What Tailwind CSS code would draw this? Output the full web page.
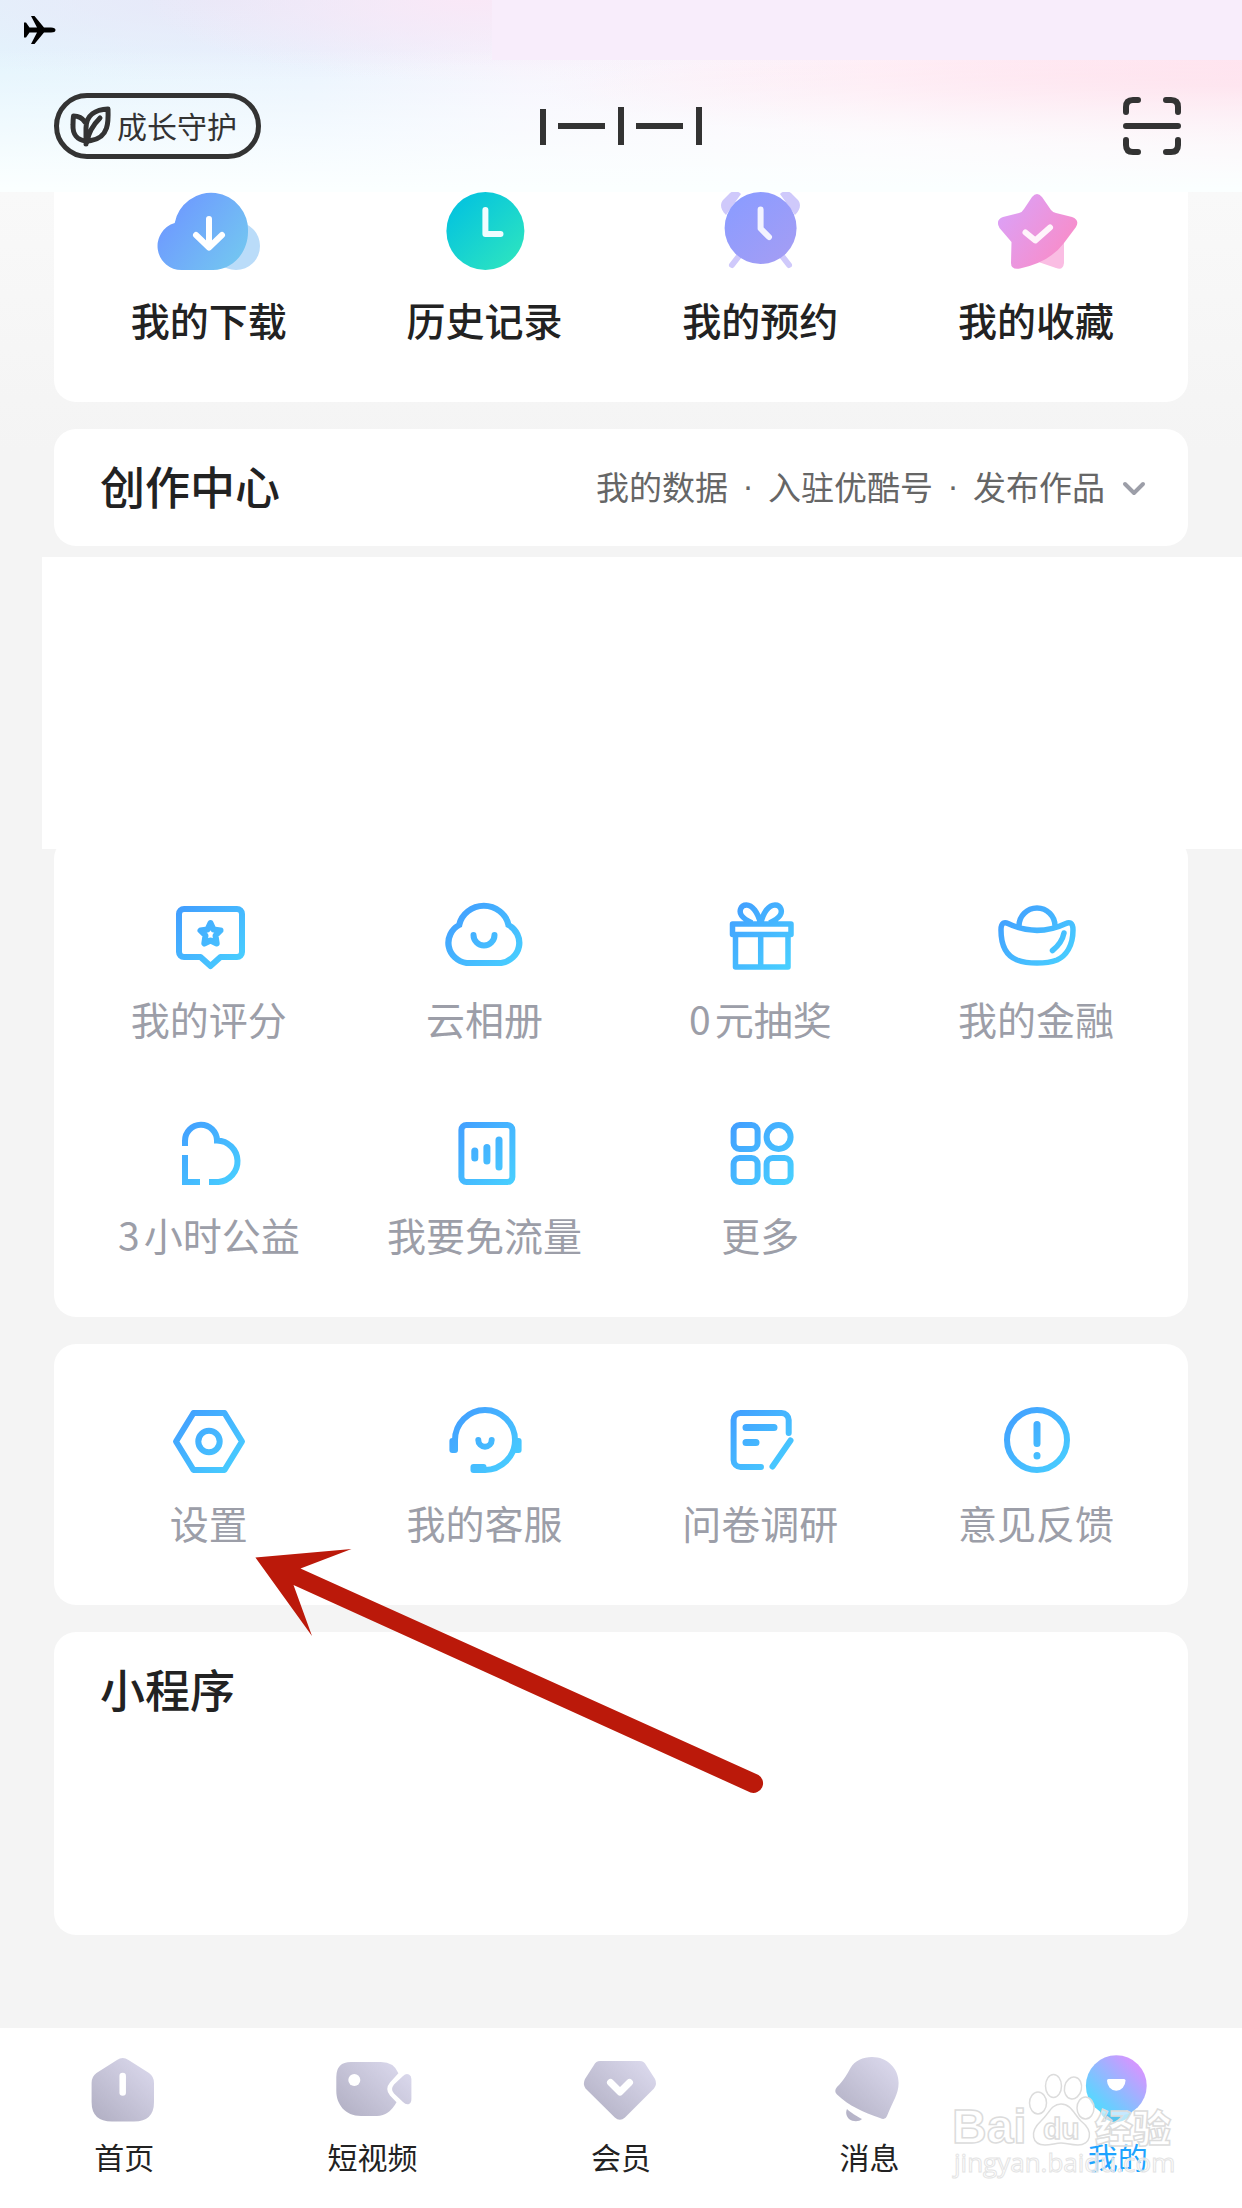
<!DOCTYPE html>
<html lang="zh-CN">
<head>
<meta charset="utf-8">
<meta name="viewport" content="width=device-width, initial-scale=1">
<title>我的</title>
<script src="https://cdn.jsdelivr.net/npm/@tailwindcss/browser@4"></script>
</head>
<body class="font-['Noto_Sans_CJK_SC',sans-serif] bg-[#f4f4f4] text-[#222]">
<!-- Shared gradients for all icons -->
<svg class="absolute size-0" aria-hidden="true">
  <defs>
    <linearGradient id="line" gradientUnits="userSpaceOnUse" x1="14" y1="12" x2="72" y2="72"><stop stop-color="#429eff"/><stop offset="1" stop-color="#48cfff"/></linearGradient>
    <linearGradient id="cloud" gradientUnits="userSpaceOnUse" x1="0" y1="20" x2="70" y2="72"><stop stop-color="#6e9aff"/><stop offset="1" stop-color="#73c5f1"/></linearGradient>
    <linearGradient id="clock" gradientUnits="userSpaceOnUse" x1="14" y1="10" x2="70" y2="68"><stop stop-color="#05c4de"/><stop offset="1" stop-color="#2ae2c2"/></linearGradient>
    <linearGradient id="alarm" gradientUnits="userSpaceOnUse" x1="18" y1="8" x2="68" y2="64"><stop stop-color="#8c9cff"/><stop offset="1" stop-color="#a29df5"/></linearGradient>
    <linearGradient id="star" gradientUnits="userSpaceOnUse" x1="8" y1="12" x2="76" y2="60"><stop stop-color="#dba1f8"/><stop offset="1" stop-color="#f98cc8"/></linearGradient>
    <linearGradient id="tab" gradientUnits="userSpaceOnUse" x1="16" y1="72" x2="66" y2="18"><stop stop-color="#b3b1c5"/><stop offset="1" stop-color="#d9d7eb"/></linearGradient>
    <linearGradient id="me" gradientUnits="userSpaceOnUse" x1="20" y1="60" x2="62" y2="18"><stop stop-color="#56d8ff"/><stop offset="1" stop-color="#d695ff"/></linearGradient>
  </defs>
</svg>

<div class="flex min-h-screen flex-col">
  <header class="bg-[linear-gradient(to_bottom,#fbffff00_25%,#fbffff_98%),radial-gradient(ellipse_at_100%_45%,#ffdcea_0,#ffdcea00_40%),radial-gradient(ellipse_at_38%_0%,#f9e8f7_0,#f9e8f700_30%),radial-gradient(ellipse_at_18%_0%,#e7e8f8_0,#e7e8f800_30%),linear-gradient(to_right,#e3f4fd,#e9f3fe_25%,#f6f4fd_42%,#fff5fb_70%,#ffeaf3)]">
    <div class="flex h-[60px] items-center justify-between">
      <svg class="ml-6 h-8 w-8" viewBox="0 0 32 32" aria-label="飞行模式" role="img"><path d="M0 8.500H2L5.500 13.500H13L7 2H10.500L20 13.500H27Q31.500 13.500 31.500 16T27 18.500H20L10.500 30H7L13 18.500H5.500L2 23.500H0Z"/></svg>
      <div class="h-full w-[60.4%] bg-[#f8edfb]"></div>
    </div>
    <div class="grid h-[132px] grid-cols-3 items-center px-[54px]">
      <button class="flex h-[66px] w-[207px] items-center gap-[5px] rounded-full border-[5px] border-[#333] pl-[11px] text-[#333]">
        <svg class="size-[42px] shrink-0" viewBox="0 0 42 42" fill="none" stroke="#333" stroke-width="5" stroke-linecap="round" stroke-linejoin="round" aria-hidden="true"><path d="M16 39V23C16 10 26 4.500 38 4C38.500 16 39 33 21 35.500Q18 36 16 36C7 35 2.500 29 3 20Q3 15 3.500 11Q11 11 15 17M17 37Q19 24 30 13"/></svg>
        <span class="pb-0.5 text-[30px] leading-10 whitespace-nowrap">成长守护</span>
      </button>
      <svg class="h-[38px] w-[162px] justify-self-center" viewBox="0 0 162 38" fill="#333" role="img" aria-label="标志"><path d="M0 2H6V38H0ZM18 16H65V22H18ZM78 0H84V38H78ZM96 16H143V22H96ZM156 0H162V38H156Z"/></svg>
      <button class="mr-[7px] justify-self-end" aria-label="扫一扫">
        <svg class="size-[58px]" viewBox="0 0 58 58" fill="none" stroke="#333" stroke-width="6" stroke-linecap="round"><path d="M3 15V10Q3 3 10 3H15M43 3H48Q55 3 55 10V15M55 43V48Q55 55 48 55H43M15 55H10Q3 55 3 48V43M3 29H55"/></svg>
      </button>
    </div>
  </header>

  <main class="flex grow flex-col bg-[linear-gradient(#f9f9f9,#f4f4f4_260px)] pb-[93px]">
    <section class="mx-[54px] grid grid-cols-4 overflow-hidden rounded-b-[22px] bg-white pr-[14px] pb-[55px] pl-[17px] text-[39px] leading-[56px] font-medium">
      <a href="#" class="flex flex-col items-center gap-[15px]">
        <svg class="size-[84px] overflow-visible" viewBox="0 0 84 84" aria-hidden="true"><circle cx="69" cy="54" r="24" fill="#badcf9"/><path d="M15 78A24 24 0 0 1 7.700 31A37 37 0 0 1 81 40C81 60 66 78 46 78Z" fill="url(#cloud)"/><path d="M42 27V55M29 43L42 55.500 55 43" fill="none" stroke="#fff" stroke-width="6" stroke-linecap="round" stroke-linejoin="round"/></svg>
        <span>我的下载</span></a>
      <a href="#" class="flex flex-col items-center gap-[15px]">
        <svg class="size-[84px] overflow-visible" viewBox="0 0 84 84" aria-hidden="true"><circle cx="42.400" cy="39" r="39" fill="url(#clock)"/><path d="M42.400 18V42H57.500" fill="none" stroke="#effdff" stroke-width="6" stroke-linecap="round" stroke-linejoin="round"/></svg>
        <span>历史记录</span></a>
      <a href="#" class="flex flex-col items-center gap-[15px]">
        <svg class="size-[84px] overflow-visible" viewBox="0 0 84 84" aria-hidden="true"><path d="M8 23C2 17 2 12 5 8L12 1C16 -2 20 -1 23 2ZM77 23C83 17 83 12 80 8L73 1C69 -2 65 -1 62 2Z" fill="#cfc9fb"/><path d="M21 64L14 73M64 64L71 73" stroke="#cfc9fb" stroke-width="6" stroke-linecap="round"/><circle cx="42.600" cy="36" r="36" fill="url(#alarm)"/><path d="M42.600 17.500V36.500L51 45" fill="none" stroke="#f3f3ff" stroke-width="6" stroke-linecap="round" stroke-linejoin="round"/></svg>
        <span>我的预约</span></a>
      <a href="#" class="flex flex-col items-center gap-[15px]">
        <svg class="size-[84px] overflow-visible" viewBox="0 0 84 84" aria-hidden="true"><path d="M70 45V71Q69 79 62 76L43 69.500L40 50Z" fill="#fabde3"/><path d="M38 5Q43 -1 48 5L57 18Q59 20.500 62 21L78 25Q86 28 82 35L70 51Q56 70 26 76.500Q17 78 17 71L17.500 50L5.500 36Q1 28 9 25L25 21Q28 20.500 30 17Z" fill="url(#star)"/><path d="M31.500 40.500L41.300 48.500 56 35.500" fill="none" stroke="#fff4fb" stroke-width="6" stroke-linecap="round" stroke-linejoin="round"/></svg>
        <span>我的收藏</span></a>
    </section>

    <section class="mx-[54px] mt-[27px] flex h-[117px] items-center justify-between rounded-[22px] bg-white pr-[42px] pb-[3px] pl-[46px]">
      <h2 class="text-[45px] leading-[60px] font-medium">创作中心</h2>
      <button class="flex items-center gap-[17px] text-[33px] leading-[48px] text-[#666]">
        <span class="flex items-center whitespace-nowrap"><span>我的数据</span><span class="w-[40px] text-center font-['Liberation_Sans',sans-serif]">·</span><span>入驻优酷号</span><span class="w-[40px] text-center font-['Liberation_Sans',sans-serif]">·</span><span>发布作品</span></span>
        <svg class="mt-1 h-4 w-6" viewBox="0 0 24 16" fill="none" stroke="#9c9ea8" stroke-width="4" stroke-linecap="round" stroke-linejoin="round" aria-hidden="true"><path d="M3 4L12 13 21 4"/></svg>
      </button>
    </section>

    <div class="z-10 mt-[11px] ml-[42px] h-[292px] bg-white"></div>

    <section class="mx-[54px] -mt-3 grid grid-cols-4 gap-y-16 rounded-[22px] bg-white pt-[57px] pr-[14px] pb-[55px] pl-[17px] text-[39px] leading-[56px] whitespace-nowrap text-[#9c9ea8]">
      <a href="#" class="flex flex-col items-center gap-3">
        <svg class="size-[84px]" viewBox="0 0 84 84" fill="none" stroke="url(#line)" stroke-width="6" stroke-linejoin="round" aria-hidden="true"><path d="M17 15H70a5 5 0 0 1 5 5V58a5 5 0 0 1-5 5H53.500L43.500 72 33.500 63H17a5 5 0 0 1-5-5V20a5 5 0 0 1 5-5Z"/><path d="M43.500 29L46.500 35.500 53.500 36.500 48.500 41.500 49.700 49.500 43.500 46.500 37.300 49.500 38.500 41.500 33.500 36.500 40.500 35.500Z"/></svg>
        <span>我的评分</span></a>
      <a href="#" class="flex flex-col items-center gap-3">
        <svg class="size-[84px]" viewBox="0 0 84 84" fill="none" stroke="url(#line)" stroke-width="6" stroke-linecap="round" aria-hidden="true"><path d="M17.500 31A24 24 0 0 1 64.500 31A20.500 20.500 0 0 1 57.500 69H24.500A20.500 20.500 0 0 1 17.500 31Z" transform="translate(-2.200 0) scale(1.050 1)"/><path d="M30.500 41a10.500 10.500 0 0 0 21 0"/></svg>
        <span>云相册</span></a>
      <a href="#" class="flex flex-col items-center gap-3">
        <svg class="size-[84px]" viewBox="0 0 84 84" fill="none" stroke="url(#line)" stroke-width="5.500" stroke-linejoin="round" aria-hidden="true"><path d="M14.500 30H73V40.500H14.500ZM17.500 40.500H70V73H17.500ZM42.700 40V73M42.700 30C40 18 34 11 28.500 11C22 11 21 18 23.500 21.500C26 25 30 27 34 29M42.700 30C45 18 51 11 57 11C63.500 11 64.500 18 62 21.500C59.500 25 55.500 27 51.500 29"/></svg>
        <span><span class="mr-1">0</span>元抽奖</span></a>
      <a href="#" class="flex flex-col items-center gap-3">
        <svg class="size-[84px]" viewBox="0 0 84 84" fill="none" stroke="url(#line)" stroke-width="5.500" stroke-linecap="round" aria-hidden="true"><path d="M25 32A18 18 0 0 1 61 32M7 36C7 28 11 28 14 29.500C33 38.500 53 38.500 72 29.500C75 28 79 28 79 36C79 52 72 62 63 66C52 70 34 70 23 66C13 62 7 52 7 36M70 39Q68 49 58.500 56.500"/></svg>
        <span>我的金融</span></a>
      <a href="#" class="flex flex-col items-center gap-3">
        <svg class="size-[84px]" viewBox="0 0 84 84" fill="none" stroke="url(#line)" stroke-width="6" aria-hidden="true"><path d="M18 36V31A16 16 0 0 1 50 30.500A21 20.800 0 0 1 51.500 72H42M33 72H18V45"/></svg>
        <span><span class="mr-1">3</span>小时公益</span></a>
      <a href="#" class="flex flex-col items-center gap-3">
        <svg class="size-[84px]" viewBox="0 0 84 84" fill="none" stroke="url(#line)" stroke-width="6" stroke-linecap="round" aria-hidden="true"><rect x="18.400" y="15" width="51" height="57" rx="5"/><path stroke-width="7" d="M31.800 41V48M43.900 37.500V51M56 30V57"/></svg>
        <span>我要免流量</span></a>
      <a href="#" class="flex flex-col items-center gap-3">
        <svg class="size-[84px]" viewBox="0 0 84 84" fill="none" stroke="url(#line)" stroke-width="6" aria-hidden="true"><rect x="15.600" y="15" width="24" height="24" rx="6"/><circle cx="60.600" cy="27" r="12"/><rect x="15.600" y="48" width="24" height="24" rx="6"/><rect x="48.600" y="48" width="24" height="24" rx="6"/></svg>
        <span>更多</span></a>
    </section>

    <section class="relative z-10 mx-[54px] mt-[27px] grid grid-cols-4 rounded-[22px] bg-white pt-[54px] pr-[14px] pb-[55px] pl-[17px] text-[39px] leading-[56px] whitespace-nowrap text-[#9c9ea8]">
      <a href="#" class="flex flex-col items-center gap-3">
        <svg class="size-[84px]" viewBox="0 0 84 84" fill="none" stroke="url(#line)" stroke-width="6" stroke-linejoin="round" aria-hidden="true"><path d="M26.500 15H57.500L75 43.500 57.500 72H26.500L9 43.500Z"/><circle cx="42" cy="43.500" r="10.700"/></svg>
        <span>设置</span></a>
      <a href="#" class="flex flex-col items-center gap-3">
        <svg class="size-[84px]" viewBox="0 0 84 84" fill="none" stroke="url(#line)" stroke-width="6" aria-hidden="true"><path d="M12 46V42A30 30 0 1 1 42 72H36"/><path stroke-linecap="round" d="M35.300 42a6.700 6.700 0 0 0 13.400 0"/><g fill="url(#line)" stroke="none"><rect x="6.400" y="40" width="8.600" height="15" rx="3"/><rect x="70" y="40" width="8.600" height="15" rx="3"/><rect x="27.500" y="66" width="16" height="9" rx="3"/></g></svg>
        <span>我的客服</span></a>
      <a href="#" class="flex flex-col items-center gap-3">
        <svg class="size-[84px]" viewBox="0 0 84 84" fill="none" stroke="url(#line)" stroke-width="6" stroke-linecap="round" aria-hidden="true"><path d="M70.700 35V22a7 7 0 0 0-7-7H22.600a7 7 0 0 0-7 7V62a7 7 0 0 0 7 7H43M72.500 42.500L54.500 68.500"/><path stroke-width="7" d="M28 29.500H56M28 44.500H38"/></svg>
        <span>问卷调研</span></a>
      <a href="#" class="flex flex-col items-center gap-3">
        <svg class="size-[84px]" viewBox="0 0 84 84" fill="none" stroke="url(#line)" stroke-width="6" stroke-linecap="round" aria-hidden="true"><circle cx="43" cy="42" r="30"/><path stroke-width="7" d="M43 26.500V45.500M43 57.500V58"/></svg>
        <span>意见反馈</span></a>
      <!-- Pointer to the settings entry -->
      <svg class="pointer-events-none absolute top-[201px] left-[196px] h-[255px] w-[520px]" viewBox="0 0 520 255" fill="#bb190a" aria-hidden="true"><path d="M5.400 12.500L101.500 4L50.500 23.500L508.500 230A9.700 9.700 0 0 1 500.500 247.500L43.500 40L62 91Z"/></svg>
    </section>

    <section class="mx-[54px] mt-[27px] min-h-[303px] rounded-[22px] bg-white px-[46px] pt-[27px]">
      <h2 class="text-[45px] leading-[60px] font-medium">小程序</h2>
    </section>
  </main>

  <nav class="relative grid h-[180px] grid-cols-5 bg-white pt-[18px] text-[30px] leading-10">
    <a href="#" class="flex flex-col items-center gap-1.5">
      <svg class="size-[84px]" viewBox="0 0 84 84" aria-hidden="true"><path d="M35 14Q40.700 10 46.500 14L67 27Q72 30.500 72 37V56Q72 75.500 52 75.500H30Q9.600 75.500 9.600 56V37Q9.600 30.500 14.500 27Z" fill="url(#tab)"/><path d="M40.700 30V46.500" stroke="#fff" stroke-width="6.500" stroke-linecap="round"/></svg>
      <span>首页</span></a>
    <a href="#" class="flex flex-col items-center gap-1.5">
      <svg class="size-[84px]" viewBox="0 0 84 84" fill="url(#tab)" aria-hidden="true"><path d="M20 16H50Q63 16 67.400 27.300L59 36.500Q53.500 43 59 49.500L65.500 56.300Q58 70 46 70H30C14 70 5.300 58 5.300 45V31Q5.300 16 20 16ZM72 30Q75 27 78 28.500Q80.400 29.500 80.400 33V53Q80.400 57 78 58Q75 59 72 56L63 47.500Q59 43.500 63 38.500Z"/><circle cx="23.300" cy="34" r="6" fill="#fff"/></svg>
      <span>短视频</span></a>
    <a href="#" class="flex flex-col items-center gap-1.5">
      <svg class="size-[84px]" viewBox="0 0 84 84" aria-hidden="true"><path d="M21 15H61Q65 15 67 19L76 33Q78.500 38 75 42.500L46 71.500Q40.900 76 35.800 71.500L6.500 42.500Q3.500 38 6 33L15 19Q17 15 21 15Z" fill="url(#tab)"/><path d="M31.500 36.500L41 46 50.500 36.500" fill="none" stroke="#fff" stroke-width="7" stroke-linecap="round" stroke-linejoin="round"/></svg>
      <span>会员</span></a>
    <a href="#" class="flex flex-col items-center gap-1.5">
      <svg class="size-[84px]" viewBox="0 0 84 84" fill="url(#tab)" aria-hidden="true"><path d="M45 11C60 11 71.600 22 71.600 37C71.600 48 66 55 60 70Q58.500 74.500 53 72C36 66 22 60 10 48.500Q6.500 45 10 41C18 33 20 28 23.500 22C28 14.500 36 11 45 11ZM20 63C23 66 30 70.500 35 73C32 76 26 76 22 73C19 70 18.500 66 20 63Z"/></svg>
      <span>消息</span></a>
    <a href="#" aria-current="page" class="flex flex-col items-center gap-1.5 text-[#1da3ff]">
      <svg class="size-[84px]" viewBox="0 0 84 84" aria-hidden="true"><path d="M22 60H58Q54 76 40 76T22 60Z" fill="#55c4ee"/><circle cx="40.300" cy="39.700" r="30.400" fill="url(#me)"/><path d="M32.500 33H48Q49.500 33 49.500 34.500A9.200 10.200 0 0 1 31 34.500Q31 33 32.500 33Z" fill="#fff"/></svg>
      <span>我的</span></a>
    <!-- Watermark over the tab bar -->
    <svg class="pointer-events-none absolute top-[42px] right-[62px] h-[115px] w-[230px]" viewBox="0 0 230 115" fill="#fff" fill-opacity=".6" stroke="#dcdcdc" stroke-width="1.500" role="img" aria-label="Baidu 经验">
      <text x="2" y="73" font-family="Liberation Sans" font-weight="700" font-size="48">Bai</text>
      <ellipse cx="88" cy="33" rx="8.500" ry="11"/><ellipse cx="103.500" cy="16" rx="8" ry="11.500"/><ellipse cx="123" cy="18" rx="8.500" ry="11" transform="rotate(12 123 18)"/><ellipse cx="135.500" cy="38" rx="8.500" ry="11"/>
      <path d="M111 34C121 34 124 44 131 51C145 62 140 75 128 75C120 75 116 73 111 73S101 75 95 75C82 75 79 62 91 51C99 44 101 34 111 34Z"/>
      <text x="93" y="69" font-family="Liberation Sans" font-weight="700" font-size="30">du</text>
      <text x="145" y="72" font-family="Noto Sans CJK SC" font-weight="900" font-size="38">经验</text>
      <text x="4" y="102" font-family="Open Sans" font-size="26" stroke="#e4e4e4" stroke-width="1">jingyan.baidu.com</text>
    </svg>
  </nav>
</div>
</body>
</html>
